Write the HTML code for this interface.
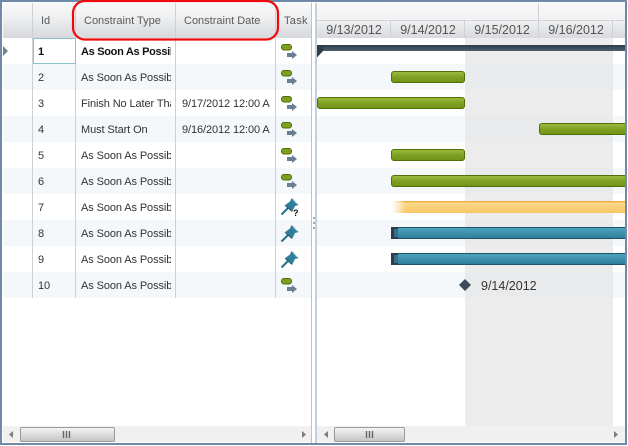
<!DOCTYPE html>
<html><head><meta charset="utf-8">
<style>
html,body{margin:0;padding:0;background:#fff}
#r{position:relative;width:628px;height:446px;overflow:hidden;background:#fff;font-family:"Liberation Sans",sans-serif;font-size:11px;color:#333}
#r div{position:absolute;box-sizing:border-box}
.t{white-space:nowrap;overflow:hidden;height:26px;line-height:29px;letter-spacing:-.1px}
.hd{background:linear-gradient(#f8f8f9,#eff0f1 40%,#d6d8db);color:#5a5a5a;line-height:37px;white-space:nowrap;overflow:hidden;top:3px;height:35px}
.v{width:1px;top:3px;height:295px;background:#cdd1d5}
.alt{left:3px;width:622px;height:26px;background:#f4f8fb}
.g{height:12px;border:1px solid #4f6f06;border-radius:3px;background:linear-gradient(#9bbb3d,#7d9f22 55%,#71941b)}
.e{border-right:0;border-radius:3px 0 0 3px}
.b{height:12px;border:1px solid #1f5468;border-right:0;background:linear-gradient(#4ba3bd,#2f7f9a)}
.c{left:391px;width:7px;height:12px;background:#2e3d49}
.c2{left:394px;width:4px;height:8px;background:#3a6f85}
.dh{top:20px;height:18px;line-height:21px;text-align:center;width:74px;color:#555;font-size:12.5px}
.dv{width:1px;background:#cfd1d4}
svg{position:absolute;overflow:visible}
</style></head><body>
<div id="r">
<div class="alt" style="top:64px"></div>
<div class="alt" style="top:116px"></div>
<div class="alt" style="top:168px"></div>
<div class="alt" style="top:220px"></div>
<div class="alt" style="top:272px"></div>
<div style="left:465px;top:38px;width:148px;height:388px;background:rgba(228,228,229,.72)"></div>

<div class="hd" style="left:3px;width:309px"></div>
<div class="hd" style="left:33px;width:42px;padding-left:8px">Id</div>
<div class="hd" style="left:76px;width:99px;padding-left:8px">Constraint Type</div>
<div class="hd" style="left:176px;width:99px;padding-left:8px">Constraint Date</div>
<div class="hd" style="left:276px;width:35px;padding-left:8px;letter-spacing:.3px">Task Mode</div>
<div class="v" style="left:32px"></div>
<div class="v" style="left:75px"></div>
<div class="v" style="left:175px"></div>
<div class="v" style="left:275px"></div>

<div class="hd" style="left:317px;width:308px;height:17px;background:linear-gradient(#f8f8f9,#f1f2f3)"></div>
<div style="left:317px;top:20px;width:308px;height:18px;background:linear-gradient(#f0f1f2,#d8dadd)"></div>
<div class="dv" style="left:538px;top:3px;height:17px"></div>
<div style="left:317px;top:20px;width:308px;height:1px;background:#d4d6d8"></div>
<div class="dh" style="left:317px">9/13/2012</div>
<div class="dh" style="left:391px">9/14/2012</div>
<div class="dh" style="left:465px">9/15/2012</div>
<div class="dh" style="left:539px">9/16/2012</div>
<div class="dv" style="left:390px;top:20px;height:18px"></div>
<div class="dv" style="left:464px;top:20px;height:18px"></div>
<div class="dv" style="left:538px;top:20px;height:18px"></div>
<div class="dv" style="left:612px;top:20px;height:18px"></div>

<div style="left:33px;top:38px;width:43px;height:26px;border:1px solid #8cc3d3"></div>
<svg style="left:3px;top:46px" width="6" height="10"><path d="M0 0L5 5L0 10Z" fill="#6d8499"/></svg>

<div class="t" style="left:38px;top:38px;font-weight:bold;color:#111">1</div>
<div class="t" style="left:38px;top:64px">2</div>
<div class="t" style="left:38px;top:90px">3</div>
<div class="t" style="left:38px;top:116px">4</div>
<div class="t" style="left:38px;top:142px">5</div>
<div class="t" style="left:38px;top:168px">6</div>
<div class="t" style="left:38px;top:194px">7</div>
<div class="t" style="left:38px;top:220px">8</div>
<div class="t" style="left:38px;top:246px">9</div>
<div class="t" style="left:38px;top:272px">10</div>

<div class="t" style="left:81px;top:38px;width:90px;font-weight:bold;color:#111;letter-spacing:-.3px">As Soon As Possible</div>
<div class="t" style="left:81px;top:64px;width:90px">As Soon As Possible</div>
<div class="t" style="left:81px;top:90px;width:90px">Finish No Later Than</div>
<div class="t" style="left:81px;top:116px;width:90px">Must Start On</div>
<div class="t" style="left:81px;top:142px;width:90px">As Soon As Possible</div>
<div class="t" style="left:81px;top:168px;width:90px">As Soon As Possible</div>
<div class="t" style="left:81px;top:194px;width:90px">As Soon As Possible</div>
<div class="t" style="left:81px;top:220px;width:90px">As Soon As Possible</div>
<div class="t" style="left:81px;top:246px;width:90px">As Soon As Possible</div>
<div class="t" style="left:81px;top:272px;width:90px">As Soon As Possible</div>
<div class="t" style="left:182px;top:90px;width:88px">9/17/2012 12:00 AM</div>
<div class="t" style="left:182px;top:116px;width:88px">9/16/2012 12:00 AM</div>

<svg style="left:0;top:0" width="628" height="446">
<defs>
<g id="a"><rect x="1.500" y="0.500" width="10" height="5.500" rx="2.500" fill="#7f9f22" stroke="#4f6f06"/><path d="M7 9h5V7l5 4-5 4v-2H7z" fill="#6c7f91"/></g>
<g id="p"><path d="M0.500 16.500L7 10" stroke="#2a7088" stroke-width="2"/><path d="M3.500 7.500L9 3.500L10.500 0L17.500 7L14 8L11 14Z" fill="#2f7f9a"/><path d="M12 1.500L16 6" stroke="#8fc3d4"/><path d="M5 8L10.500 13" stroke="#235f76"/></g>
</defs>
<use href="#a" x="280" y="44"/><use href="#a" x="280" y="70"/><use href="#a" x="280" y="96"/><use href="#a" x="280" y="122"/><use href="#a" x="280" y="148"/><use href="#a" x="280" y="174"/><use href="#a" x="280" y="278"/>
<use href="#p" x="281" y="198"/><use href="#p" x="281" y="225"/><use href="#p" x="281" y="251"/>
<text x="293" y="216" font-family="Liberation Sans" font-size="9" font-weight="bold" fill="#111">?</text>
</svg>

<div style="left:317px;top:45px;width:308px;height:6px;background:linear-gradient(#2c3b47,#4a5f70)"></div>
<svg style="left:317px;top:45px" width="6" height="13"><path d="M0 0H6V6L0 12.500Z" fill="#2e3d49"/></svg>
<div class="g" style="left:391px;top:71px;width:74px"></div>
<div class="g" style="left:317px;top:97px;width:148px"></div>
<div class="g e" style="left:539px;top:123px;width:86px"></div>
<div class="g" style="left:391px;top:149px;width:74px"></div>
<div class="g e" style="left:391px;top:175px;width:234px"></div>
<div style="left:392px;top:201px;width:233px;height:12px;background:linear-gradient(90deg,#fff,rgba(255,255,255,0) 14px),linear-gradient(#e9a42e 0,#fdd888 18%,#f8c566)"></div>
<div class="b" style="left:391px;top:227px;width:234px"></div>
<div class="b" style="left:391px;top:253px;width:234px"></div>
<div class="c" style="top:227px"></div><div class="c2" style="top:229px"></div>
<div class="c" style="top:253px"></div><div class="c2" style="top:255px"></div>
<svg style="left:459px;top:279px" width="13" height="13"><path d="M6 0L12 6L6 12L0 6Z" fill="#3f4c59"/></svg>
<div style="left:481px;top:279px;line-height:14px;font-size:12.500px;color:#333;white-space:nowrap">9/14/2012</div>

<div style="left:311px;top:3px;width:1px;height:440px;background:#b6c4d3"></div>
<div style="left:312px;top:3px;width:4px;height:440px;background:#fff"></div>
<div style="left:315px;top:3px;width:2px;height:440px;background:#c3d0dc"></div>
<div style="left:313px;top:217px;width:2px;height:2px;background:#9aa9b8"></div>
<div style="left:313px;top:222px;width:2px;height:2px;background:#9aa9b8"></div>
<div style="left:313px;top:227px;width:2px;height:2px;background:#9aa9b8"></div>

<div style="left:3px;top:426px;width:308px;height:16px;background:#f0f0f0"></div>
<div style="left:317px;top:426px;width:308px;height:16px;background:#f0f0f0"></div>
<div style="left:20px;top:427px;width:95px;height:15px;border:1px solid #9a9a9a;border-radius:2px;background:linear-gradient(#f4f4f4,#dcdcdc 50%,#c6c6c6)"></div>
<div style="left:334px;top:427px;width:71px;height:15px;border:1px solid #9a9a9a;border-radius:2px;background:linear-gradient(#f4f4f4,#dcdcdc 50%,#c6c6c6)"></div>
<svg style="left:0;top:0" width="628" height="446">
<path d="M13 431L9 434.500L13 438Z M302 431L306 434.500L302 438Z M328 431L324 434.500L328 438Z M614 431L618 434.500L614 438Z" fill="#7e7e7e"/>
<path d="M63.500 431v7M66.500 431v7M69.500 431v7M366.500 431v7M369.500 431v7M372.500 431v7" stroke="#666" stroke-width="1.400"/>
<rect x="1" y="1" width="625" height="443" fill="none" stroke="#6f8aa6" stroke-width="2"/>
<rect x="73" y="1" width="205" height="38.500" rx="12" fill="none" stroke="#ee0a0a" stroke-width="2.200"/>
</svg>
</div>
</body></html>
